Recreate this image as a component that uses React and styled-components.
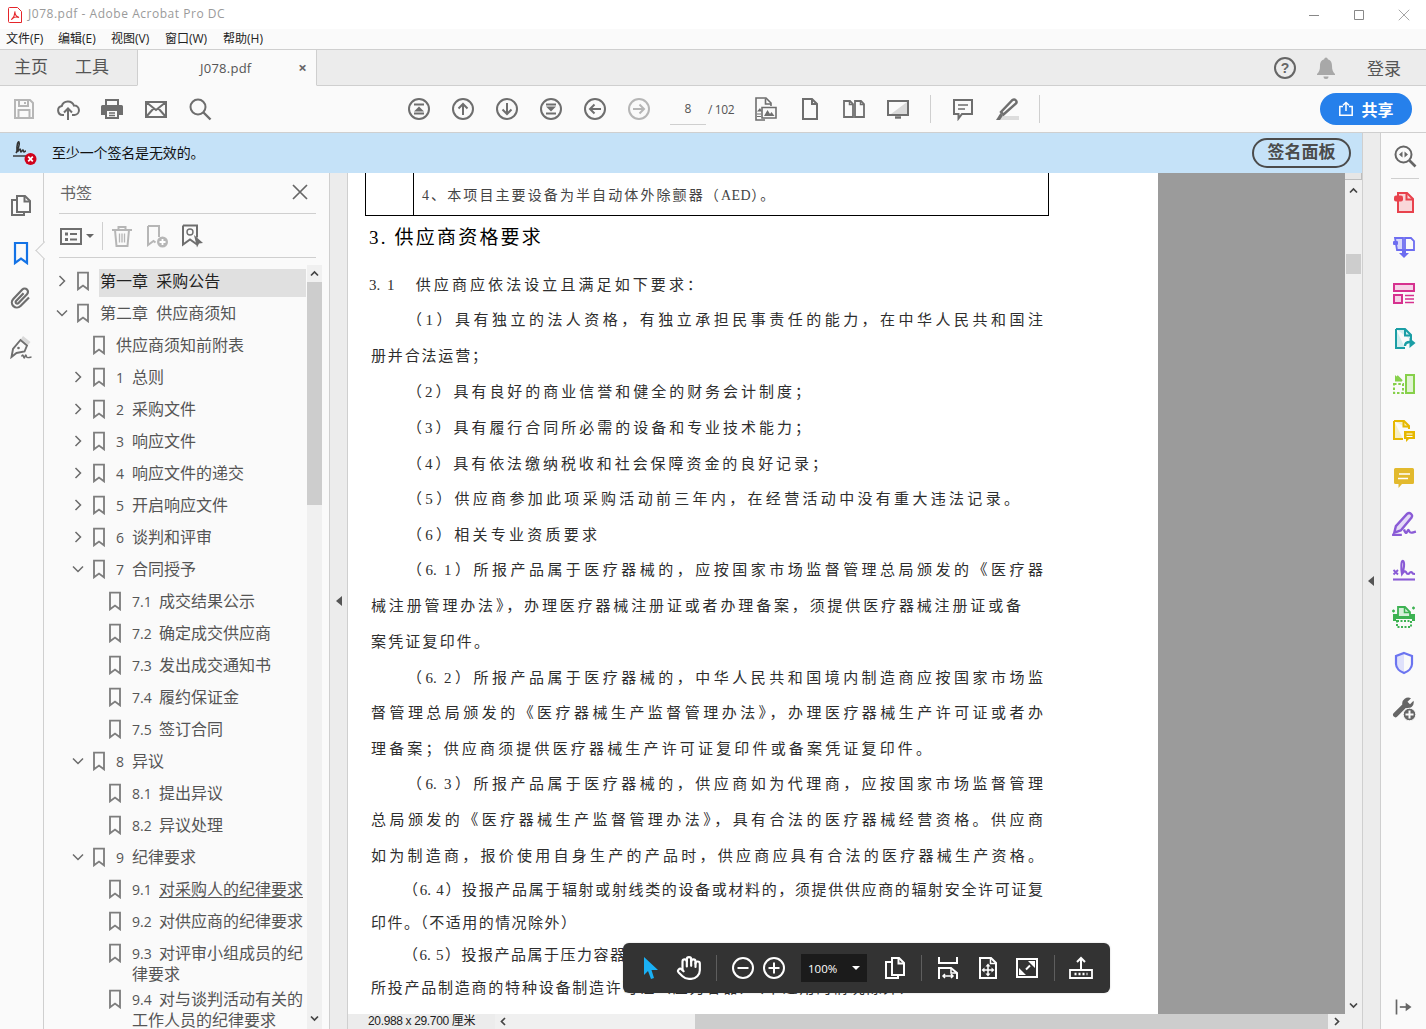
import React from 'react';
import styled, { createGlobalStyle } from 'styled-components';
import { Hand } from 'lucide-react';

const UI = `"Open Sans", "Noto Sans CJK SC", sans-serif`;
const Global = createGlobalStyle`
  html, body { margin: 0; padding: 0; background: #fafafa; }
  * { box-sizing: border-box; }
  body { font-family: ${UI}; }
`;

const Window = styled.div`width: 1426px; height: 1029px; display: flex; flex-direction: column; overflow: hidden; position: relative; background: #fafafa;`;
const TitleBar = styled.div`height: 29px; background: #fff; display: flex; align-items: center; padding-left: 8px; font-size: 12px; color: #9a9a9a; font-family: "Open Sans", sans-serif;`;
const TitleText = styled.span`margin-left: 6px; letter-spacing: .53px; margin-top: -2px;`;
const WinButtons = styled.div`margin-left: auto; display: flex; align-items: center;`;
const WinBtn = styled.div`width: 45px; height: 29px; display: flex; align-items: center; justify-content: center;`;
const MenuBar = styled.div`height: 21px; background: #fafafa; border-bottom: 1px solid #cfcfcf; display: flex; align-items: center; padding: 0 0 2px 6px; font-size: 12px; color: #222;`;
const MenuItem = styled.span`width: ${p => p.$w}px;`;
const TabBar = styled.div`height: 36px; background: #ececec; border-bottom: 1px solid #cfcfcf; display: flex; align-items: stretch;`;
const HomeTab = styled.div`width: ${p => p.$w}px; padding-left: ${p => p.$p}px; font-size: 17px; line-height: 34px; color: #555;`;
const ActiveTab = styled.div`width: 180px; height: 36px; background: #fafafa; border-left: 1px solid #cfcfcf; border-right: 1px solid #cfcfcf; border-bottom: 1px solid #fafafa; display: flex; align-items: center; position: relative; font-size: 13px; letter-spacing: .25px; color: #555; padding-left: 62px;`;
const TabClose = styled.span`margin-left: auto; margin-right: 9px; font-size: 15px; font-weight: 700; color: #666; line-height: 1;`;
const TabRight = styled.div`margin-left: auto; display: flex; align-items: center; padding-right: 25px;`;
const Login = styled.span`font-size: 17px; color: #555; margin-left: 29px;`;
const BellSlot = styled.div`margin-left: 17px;`;
const Toolbar = styled.div`height: 47px; background: #fafafa; border-bottom: 1px solid #cfcfcf; display: flex; align-items: center; padding-left: 2px;`;
const Slot = styled.div`width: ${p => p.$w || 44}px; height: 32px; display: flex; align-items: center; justify-content: center; flex: none; margin-left: ${p => p.$ml || 0}px;`;
const PageField = styled.div`width: 36px; margin-left: 9px; height: 30px; border-bottom: 1px solid #cfcfcf; font-size: 12px; color: #555; text-align: center; line-height: 28px; margin-top: 2px;`;
const PageTotal = styled.span`width: 35px; margin-left: 2px; font-size: 12px; color: #555; letter-spacing: -.4px; flex: none;`;
const ToolSep = styled.div`width: 1px; height: 28px; background: #cfcfcf; flex: none; margin-left: ${p => p.$ml}px;`;
const ShareBtn = styled.button`margin-left: auto; margin-right: 14px; width: 92px; height: 32px; border: 0; border-radius: 16px; background: #2680eb; color: #fff; display: flex; align-items: center; justify-content: center; gap: 7px; font: 700 16px ${UI}; padding: 0;`;

const Body = styled.div`flex: 1; display: flex; min-height: 0;`;
const MainCol = styled.div`width: 1362px; display: flex; flex-direction: column; min-height: 0;`;
const NotifyBar = styled.div`height: 40px; background: #c5e2f8; display: flex; align-items: center; padding: 0 11px 0 12px; font-size: 14px; color: #111;`;
const NotifyText = styled.span`margin: 0 0 2px 14px; letter-spacing: -.15px;`;
const SignPanelBtn = styled.div`margin-left: auto; width: 99px; height: 30px; border: 2px solid #4b4b4b; border-radius: 15px; display: flex; align-items: center; justify-content: center; font-size: 17px; line-height: 1; font-weight: 700; color: #4b4b4b; padding-bottom: 3px;`;
const Content = styled.div`flex: 1; display: flex; min-height: 0;`;

const LeftRail = styled.div`width: 44px; border-right: 1px solid #cfcfcf; background: #fafafa; display: flex; flex-direction: column; align-items: center; position: relative; padding: 20px 2px 0 0;`;
const RailSlot = styled.div`height: ${p => p.$h}px; display: flex; align-items: flex-start; justify-content: center;`;
const Notch = styled.div`position: absolute; left: 38px; top: 71px; width: 13px; height: 13px; background: #fafafa; border-left: 1px solid #cfcfcf; border-bottom: 1px solid #cfcfcf; transform: rotate(45deg);`;

const Panel = styled.div`width: 286px; border-right: 1px solid #cfcfcf; background: #fafafa; display: flex; flex-direction: column; min-height: 0;`;
const PanelHead = styled.div`height: 41px; margin: 0 13px 0 15px; border-bottom: 1px solid #cfcfcf; display: flex; align-items: center; justify-content: space-between; font-size: 16px; color: #666; padding: 0 8px 3px 1px;`;
const PanelTools = styled.div`height: 44px; margin: 0 13px 0 15px; border-bottom: 1px solid #cfcfcf; display: flex; align-items: center;`;
const ToolCaret = styled.span`width: 0; height: 0; border-left: 4px solid transparent; border-right: 4px solid transparent; border-top: 4px solid #666; margin-left: 3px;`;
const PanelSep = styled.div`width: 1px; height: 28px; background: #cfcfcf; margin: 0 2px 0 8px;`;
const TreeWrap = styled.div`flex: 1; display: flex; min-height: 0; padding: 7px 7px 0 10px;`;
const Tree = styled.div`flex: 1; overflow: hidden; min-width: 0;`;
const Row = styled.div`height: ${p => p.$h || 32}px; display: flex; align-items: flex-start; padding-left: ${p => p.$lv * 16}px;`;
const Chev = styled.div`width: 16px; height: 32px; flex: none; display: flex; align-items: center; justify-content: center;`;
const Mark = styled.div`width: 22px; margin-left: 2px; height: 32px; flex: none; display: flex; align-items: center; justify-content: center;`;
const Label = styled.div`flex: 1; min-width: 0; margin: 4px 0 0 5px; padding: 2px 3px ${p => p.$sel ? 6 : 0}px 1px; font-size: 16px; line-height: 20px; white-space: pre-wrap; color: ${p => p.$sel ? '#222' : '#555'}; background: ${p => p.$sel ? '#e0e0e0' : 'transparent'}; height: fit-content;`;
const Num = styled.span`display: inline-block; width: ${p => p.$w}px; font-size: 14px;`;
const Linked = styled.span`text-decoration: underline; text-underline-offset: 2px;`;
const TreeScroll = styled.div`width: 15px; flex: none; background: #f0f0f0; display: flex; flex-direction: column; margin-left: 1px;`;
const ScrollBtn = styled.div`height: ${p => p.$h}px; display: flex; align-items: center; justify-content: center;`;
const TreeThumb = styled.div`height: 223px; background: #cdcdcd;`;
const Fill = styled.div`flex: 1;`;

const Collapse = styled.div`width: 18px; background: #ececec; border-right: 1px solid #cfcfcf; display: flex; align-items: center; justify-content: center;`;
const Triangle = styled.span`width: 0; height: 0; border-top: 5px solid transparent; border-bottom: 5px solid transparent; border-right: 6px solid #555;`;
const DocArea = styled.div`flex: 1; display: flex; flex-direction: column; min-width: 0;`;
const DocRow = styled.div`flex: 1; display: flex; min-height: 0;`;
const Page = styled.div`width: 810px; background: #fff; overflow: hidden; font-family: "Liberation Serif", "Noto Sans CJK SC", serif; color: #2e2e2e;`;
const PdfTable = styled.div`margin-left: 17px; width: 684px; height: 43px; border: solid #000; border-width: 0 1px 1.5px 1px; display: flex;`;
const PdfCellA = styled.div`width: 48px; border-right: 1px solid #000;`;
const PdfCellB = styled.div`padding: 14px 0 0 8px; font-size: 14px; line-height: 18px; letter-spacing: 2.1px; white-space: nowrap; color: #444;`;
const Aed = styled.span`letter-spacing: .5px; font-size: 14px;`;
const PdfHeading = styled.div`margin: 1px 0 8px 21px; height: 42px; line-height: 42px; font-size: 19px; letter-spacing: 2.2px; color: #000;`;
const PdfLine = styled.div`margin-left: ${p => p.$l}px; width: ${p => p.$w}px; height: ${p => p.$h}px; line-height: 36px; font-size: 15px; text-align: justify; text-align-last: justify;`;
const Gray = styled.div`width: 187px; background: #9b9b9b;`;
const VScroll = styled.div`width: 17px; background: #f0f0f0; display: flex; flex-direction: column; flex: none;`;
const VCap = styled.div`height: 7px; background: #e6e6e6; border: solid #bdbdbd; border-width: 0 1px 1px 0;`;
const VBtn = styled.div`height: ${p => p.$h}px; display: flex; align-items: center; justify-content: center;`;
const VThumb = styled.div`height: 20px; background: #cdcdcd; margin: 0 1px;`;
const StatusBar = styled.div`height: 15px; display: flex; align-items: center; background: #f0f0f0;`;
const Dim = styled.div`width: 147px; height: 15px; background: #ececec; padding-left: 20px; font: 12px/15px "Liberation Sans", "Noto Sans CJK SC", sans-serif; color: #222; letter-spacing: -.35px; white-space: nowrap;`;
const HBtn = styled.div`width: 17px; height: 15px; display: flex; align-items: center; justify-content: center; flex: none;`;
const HGap = styled.div`width: 183px; height: 15px; flex: none;`;
const HThumb = styled.div`flex: 1; height: 15px; background: #cdcdcd;`;

const Gutter = styled.div`width: 19px; background: #ececec; border-left: 1px solid #cfcfcf; border-right: 1px solid #cfcfcf; display: flex; align-items: center; justify-content: center; padding-right: 2px;`;
const RightRail = styled.div`width: 45px; background: #fafafa; display: flex; flex-direction: column; align-items: center;`;
const RailTop = styled.div`height: 46px; width: 28px; border-bottom: 1px solid #cfcfcf; display: flex; align-items: center; justify-content: center; margin-left: 2px; flex: none;`;
const RailIcon = styled.div`height: ${p => p.$h || 46}px; display: flex; align-items: center; justify-content: center; flex: none;`;
const RailSpacer = styled.div`flex: 1;`;

const FloatBar = styled.div`position: absolute; left: 623px; top: 943px; width: 487px; height: 50px; background: #333; border-radius: 6px; display: flex; align-items: center; padding-left: 8px; box-shadow: 0 0 2px rgba(0,0,0,.2);`;
const FSlot = styled.div`width: ${p => p.$w}px; margin-left: ${p => p.$ml || 0}px; height: 32px; display: flex; align-items: center; justify-content: center; flex: none;`;
const FSep = styled.div`width: 1px; height: 26px; background: #5e5e5e; margin-left: ${p => p.$ml}px; flex: none;`;
const ZoomBox = styled.div`width: 66px; height: 28px; background: #1b1b1b; margin-left: 12px; display: flex; align-items: center; justify-content: space-between; padding: 0 7px 0 7px; color: #fff; font: 11.500px "Open Sans", sans-serif; flex: none;`;
const ZoomCaret = styled.span`width: 0; height: 0; border-left: 4px solid transparent; border-right: 4px solid transparent; border-top: 4px solid #fff;`;

const Svg = styled.svg`display: block; flex: none; width: ${p => p.$w || p.$s || 24}px; height: ${p => p.$s || 24}px; color: ${p => p.$c || '#6e6e6e'};`;
const I = ({ s, w, c, vb = '0 0 24 24', children }) => (
  <Svg $s={s} $w={w} $c={c} viewBox={vb} fill="none" stroke="currentColor" strokeWidth="2" strokeLinecap="butt" strokeLinejoin="miter">{children}</Svg>
);

const L = '#b6b6b6';
const Save = () => <I c={L}><path d="M3 3h15l3 3v15H3z"/><path d="M7 3v6h9V3M6.500 21v-8h11v8"/><path d="M13 5v2"/></I>;
const Cloud = () => <I><path d="M8 18H6.500a4.500 4.500 0 0 1-.8-8.900A6.500 6.500 0 0 1 18 8.600a4.700 4.700 0 0 1 .5 9.400H16"/><path d="M12 23V12M8 15.500l4-4 4 4"/></I>;
const Print = () => <I><path fill="currentColor" stroke="none" d="M5 2h14v6h2.500A1.500 1.500 0 0 1 23 9.500V18h-4v4H5v-4H1V9.500A1.500 1.500 0 0 1 2.500 8H5zM7 4v4h10V4zM7 14v6h10v-6z"/><path strokeWidth="1.300" d="M9 16h6M9 18.500h6"/></I>;
const Mail = () => <I><path d="M2 5h20v15H2zM2 5l10 8 10-8M2 20l7.500-8.500M22 20l-7.500-8.500"/></I>;
const Search = () => <I><circle cx="10" cy="10" r="7.500"/><path strokeWidth="2.400" d="M15.500 15.500L22.500 22.500"/></I>;
const Circ = ({ c, children }) => <I c={c}><circle cx="12" cy="12" r="10"/>{children}</I>;
const Tri = p => <path fill="currentColor" stroke="none" {...p}/>;
const First = () => <Circ><Tri d="M12 9.500l5 5H7z"/><path d="M7 7.500h10M7 16.500h10"/></Circ>;
const Last = () => <Circ><Tri d="M12 14.500l5-5H7z"/><path d="M7 7.500h10M7 16.500h10"/></Circ>;
const Up = () => <Circ><path d="M12 18V7M7.500 11.500L12 7l4.500 4.500"/></Circ>;
const Down = () => <Circ><path d="M12 6v11M7.500 12.500L12 17l4.500-4.500"/></Circ>;
const Back = () => <Circ><path d="M18 12H7M11.500 7.500L7 12l4.500 4.500"/></Circ>;
const Fwd = () => <Circ c={L}><path d="M6 12h11M12.500 7.500L17 12l-4.500 4.500"/></Circ>;
const DocPic = () => <I><path strokeWidth="1.600" d="M12 23H3V1h10l5 5v3"/><path strokeWidth="1.600" d="M12.500 1.500V7H18"/><path strokeWidth="1.600" d="M9 10.500h14V21H9z"/><Tri d="M11 19l3.500-6 2.500 4 1.500-2 3 4zM4 14.500L7 11l2 3.500z"/><path strokeWidth="1.200" d="M4 17h4M4 19.500h4"/></I>;
const PageIc = () => <I><path d="M5 2h9l5 5v15H5z"/><path d="M14 2v5h5"/></I>;
const TwoPage = () => <I><path strokeWidth="1.800" d="M2 4h6l3 3v13H2zM13 4h6l3 3v13h-9z"/><path strokeWidth="1.500" d="M7.500 4v3.500H11M18.500 4v3.500H22"/></I>;
const Monitor = () => <I><path fill="#d9d9d9" stroke="none" d="M21 5v12H5z"/><path d="M2 4h20v14H2z"/><path strokeWidth="2.400" d="M9 20.500h6"/></I>;
const Comment = () => <I><path d="M3 3h18v14H11l-3.500 4.500V17H3z"/><path strokeWidth="1.500" d="M7 8h10M7 12h7"/></I>;
const Marker = () => <I><path fill="#dcdcdc" stroke="none" d="M5 19h19v4H3z"/><path strokeWidth="2.400" d="M8.500 17.500L6 15 17.500 3a2.500 2.500 0 0 1 3.500 3.500z"/><Tri d="M5.500 16L8 18.500 5 23H1z"/></I>;
const ShareIc = () => <Svg $s={16} $c="#fff" viewBox="0 0 16 16" fill="none" stroke="currentColor" strokeWidth="1.500"><path d="M5 5.500H1.800v8.700h12.400V5.500H11"/><path d="M8 10V1.500M5 4.300L8 1.500l3 2.800"/></Svg>;

const Help = () => <I c="#666"><circle cx="12" cy="12" r="10"/><text x="12" y="17" textAnchor="middle" fontSize="14" fontWeight="700" stroke="none" fill="currentColor" fontFamily="Liberation Sans">?</text></I>;
const Bell = () => <I c="#a8a8a8"><path fill="currentColor" stroke="none" d="M12 1.500a1.800 1.800 0 0 1 1.800 1.700C17 4 18 7 18 10c0 4 1 6 3 8v1H3v-1c2-2 3-4 3-8 0-3 1-6 4.200-6.800A1.800 1.800 0 0 1 12 1.500zM9.500 20.500h5a2.500 2.500 0 0 1-5 0z"/></I>;
const AcroLogo = () => <Svg $s={16} $w={14} $c="#e5252a" viewBox="0 0 14 16" fill="none" stroke="currentColor"><path d="M1.500.5h8l4 4v11h-12a1 1 0 0 1-1-1v-13a1 1 0 0 1 1-1z"/><path strokeWidth="1.100" d="M7 4.500c-.6 1.500.5 3 1 4s2.200 1.500 3 2c-1-.5-4.500-1-6 .5S3 13 4.500 11.500 6.800 6.500 7 4.500z"/></Svg>;

const SignBad = () => (
  <Svg $s={26} $w={26} $c="#333" viewBox="0 0 26 26" fill="none" stroke="currentColor" strokeWidth="1.600">
    <path d="M4 13c2-3 4-9 3-11-1-1-2.500 3-2 9 .3 2 2-2 3-2s0 3 1 3 1-2 2-2 0 2 1 2 1-1 2-1"/>
    <path strokeWidth="1.400" d="M1 16h14"/>
    <circle cx="18.500" cy="19" r="6" fill="#d0021b" stroke="none"/>
    <path stroke="#fff" strokeWidth="1.800" d="M16.200 16.700l4.600 4.600M20.800 16.700l-4.600 4.600"/>
  </Svg>
);
const Pages = ({ c }) => <I c={c}><path strokeWidth="2" d="M8 3h8l5 5v11H8z"/><path strokeWidth="2" d="M15.500 3v5.500H21"/><path strokeWidth="2" d="M8 7H3v15h12v-3"/></I>;
const BookmarkOutline = ({ c, s = 24, sw = 2.200 }) => <I c={c} s={s}><path strokeWidth={sw} d="M6 2h12v20l-6-4.500L6 22z"/></I>;
const Clip = () => <I><path strokeWidth="2.200" d="M20 11.500l-8.500 8.500a5 5 0 0 1-7.200-7l9-9.500a3.300 3.300 0 0 1 4.700 4.700l-8.700 9a1.500 1.500 0 0 1-2.200-2.200l7.500-7.800"/></I>;
const Pen = () => <I><path fill="#d9d9d9" stroke="none" d="M14 1l7.500 6-2.500 3-7-6z"/><path strokeWidth="1.900" d="M11.500 5L18 10.500 15.500 16.500 7.500 18 2.500 22 4 14z"/><circle cx="9.500" cy="13" r="1.300" fill="currentColor" stroke="none"/><path strokeWidth="1.500" d="M12.500 21.500c1-2 1.500-2 2 0s1 2 1.500 0 1-2 1.500 0 1.500 1 5 .5"/></I>;
const X = ({ s = 16, c = '#666', sw = 1.700 }) => <Svg $s={s} $c={c} viewBox="0 0 16 16" fill="none" stroke="currentColor" strokeWidth={sw}><path d="M1 1l14 14M15 1L1 15"/></Svg>;
const ListIc = () => <I><path d="M2 5h20v15H2z"/><Tri d="M6 8.500h3v3H6zM6 14h3v3H6z"/><path strokeWidth="1.800" d="M11 10h7M11 15.500h7"/></I>;
const Trash = () => <I c={L}><path d="M2 6h20M8.500 6V3h7v3M5 6l1.500 16h11L19 6"/><path strokeWidth="1.300" d="M9.500 9.500v9M12 9.500v9M14.500 9.500v9"/></I>;
const AddMark = () => <I c={L}><path d="M4 2h11v11M4 2v19l5.500-4 2 1.500"/><circle cx="18.500" cy="18" r="5.500" fill="currentColor" stroke="none"/><path stroke="#fff" strokeWidth="1.800" d="M18.500 15v6M15.500 18h6"/></I>;
const SetMark = () => <I><path d="M3 1.500h14v12M3 1.500V20.500l7-5 7 5"/><circle cx="10" cy="8" r="3" strokeWidth="1.400"/><Tri d="M14 11l9 8-4 .5-2 4z"/></I>;
const ChevR = () => <Svg $s={12} $c="#6b6b6b" viewBox="0 0 12 12" fill="none" stroke="currentColor" strokeWidth="1.500"><path d="M3.500 1l5 5-5 5"/></Svg>;
const ChevD = () => <Svg $s={12} $c="#6b6b6b" viewBox="0 0 12 12" fill="none" stroke="currentColor" strokeWidth="1.500"><path d="M1 3.500l5 5 5-5"/></Svg>;
const Caret = ({ d }) => <Svg $s={9} $c="#444" viewBox="0 0 9 9" fill="none" stroke="currentColor" strokeWidth="1.700"><path d={d === 'up' ? 'M1 6.500l3.500-3.500 3.500 3.500' : d === 'down' ? 'M1 2.500l3.500 3.500 3.500-3.500' : 'M6 1L2.500 4.500 6 8'}/></Svg>;
const CaretR = () => <Svg $s={9} $c="#444" viewBox="0 0 9 9" fill="none" stroke="currentColor" strokeWidth="1.700"><path d="M3 1l3.500 3.500L3 8"/></Svg>;

/* right rail */
const ZoomDoc = () => <I c="#666"><circle cx="10.500" cy="10.500" r="8"/><path strokeWidth="2.600" d="M16.500 16.500l6 6"/><Tri d="M6 10.500l3.500-3v6zM15 10.500l-3.500-3v6z"/></I>;
const RExport = () => { const c = '#e8424d'; return <I c={c}><path fill="#f9d7d9" d="M6 3h9l6 6v13H6z"/><path d="M14.500 3v6.500H21"/><rect x="2" y="5.500" width="9" height="6" rx="2" fill={c} stroke="none"/></I>; };
const RCombine = () => { const c = '#6d6df0'; return <I c={c}><path fill="#d9d9fb" strokeWidth="1.800" d="M3 3h8v12H5z"/><path strokeWidth="1.800" d="M13 3h6l3 3v9h-9z"/><Tri d="M10 14h4v4h3l-5 5-5-5h3z"/><rect x="1" y="6" width="5" height="4" rx="1" fill={c} stroke="none"/></I>; };
const ROrganize = () => { const c = '#d6318f'; return <I c={c}><path fill="#f6d4e8" d="M2 3h20v7H2zM2 14h8v8H2z"/><path strokeWidth="1.500" d="M13 14.500h9M13 18h9M13 21.500h9"/></I>; };
const RExportDoc = () => { const c = '#1a9ea5'; return <I c={c}><path fill="#d3eeef" d="M4 2h9l6 6v5M4 2v19h9"/><path d="M13 2v6.500h6"/><path strokeWidth="2.300" d="M13 19c0-3 2-4 5-4"/><Tri d="M17.500 11l6 5-6 5z"/></I>; };
const RCompress = () => { const c = '#86d04a'; return <I c={c}><path fill="#e2f4d4" d="M14 2h8v18h-8z"/><path strokeDasharray="2.500 1.800" d="M2 11h9v9H2z"/><path strokeWidth="2.200" d="M10 8L5 3"/><Tri d="M3 2v6.500h6.500z"/></I>; };
const RFormDoc = () => { const c = '#e6b800'; return <I c={c}><path fill="#f6efc4" d="M2 2h10l5 5v3M2 2v18h9"/><path d="M11.500 2v5.500H17"/><path fill={c} stroke="none" d="M12 12h11v8h-6l-3 3v-3h-2z"/><path stroke="#fff" strokeWidth="1.100" d="M14.500 15h6M14.500 17.500h6"/></I>; };
const RNote = () => { const c = '#e2b92d'; return <I c={c}><path fill={c} stroke="none" d="M3.500 2h17A1.500 1.500 0 0 1 22 3.500v13a1.500 1.500 0 0 1-1.500 1.500H10l-3.500 4V18h-3A1.500 1.500 0 0 1 2 16.500v-13A1.500 1.500 0 0 1 3.500 2z"/><path stroke="#fff" strokeWidth="1.700" d="M7 8h11M6 12.500h10"/></I>; };
const RFill = () => { const c = '#8a5bd6'; return <I c={c} s={26}><path fill="#e5daf7" strokeWidth="2.200" d="M3 20l1.500-6L15 2.500a2.700 2.700 0 0 1 4 3.500L9 18z"/><path strokeWidth="2.200" d="M1 22h9M12 17c1 3.500 2 4 3 2s1-2 2 0 2 1 6 0"/></I>; };
const RSign = () => { const c = '#8a5bd6'; return <I c={c}><path strokeWidth="1.900" d="M1.500 12l4.500 4.500M6 12l-4.500 4.500"/><path strokeWidth="2.100" d="M10 16c2-4 3-12 1-13s-2 8-1 13c2-3 3-3 4-2s0 2 2 2 1-2 3-2 0 2 4 2"/><path strokeWidth="2.100" d="M1 21.500h22"/></I>; };
const RPrint = () => { const c = '#3cb252'; return <I c={c}><path fill={c} stroke="none" d="M1 9h22v7h-3v-2H4v2H1z"/><path fill="#d5efda" strokeWidth="1.800" d="M6 12V2h7l5 5v5z"/><path strokeWidth="1.500" d="M12.500 2v5.500H18"/><path strokeDasharray="2 1.500" d="M5 16h14v6H5z"/><path strokeWidth="1.300" d="M20 3h3M21.500 1.500v3M0 6h3M1.500 4.500v3"/></I>; };
const RShield = () => { const c = '#6b74f0'; return <I c={c}><path fill="#dfe1fb" stroke="none" d="M12 2L4 5v8c0 4 4 7.500 8 9z"/><path strokeWidth="2.200" d="M12 2l8 3v8c0 4-4 7.500-8 9-4-1.500-8-5-8-9V5z"/></I>; };
const RTools = () => <I c="#666"><path fill="currentColor" stroke="none" d="M19 1.200L15.500 4.700 18 7.200l3.500-3.500A6 6 0 0 1 13.800 11L5 19.800A2.500 2.500 0 0 1 1.500 16.300L10.300 7.500A6 6 0 0 1 19 1.200z"/><circle cx="17.500" cy="17.500" r="6.300" fill="currentColor" stroke="#fafafa" strokeWidth="1"/><path stroke="#fafafa" strokeWidth="2" d="M17.500 13.500v8M13.500 17.500h8"/></I>;
const RCollapse = () => <I s={20} c="#666"><path d="M3 3v18"/><path strokeWidth="2" d="M7 12h12"/><Tri d="M14 7l7 5-7 5z"/></I>;

/* floating bar */
const W = '#fff';
const Cursor = () => <I c="#1ab0f5"><Tri d="M6 1l14 13h-6.500l2.500 8-3 1-3-8L6 19z"/></I>;
const FMinus = () => <I c={W}><circle cx="12" cy="12" r="10"/><path d="M6.500 12h11"/></I>;
const FPlus = () => <I c={W}><circle cx="12" cy="12" r="10"/><path d="M6.500 12h11M12 6.500v11"/></I>;
const FPages = () => <I c={W}><path d="M9 2h7l5 5v12H9z"/><path d="M15.500 2v5.500H21"/><path d="M9 6H3v16h12v-3"/></I>;
const FFitW = () => <I c={W}><path d="M3 1v6h18V1"/><path d="M3 23V12h12l6 5v6"/><path strokeWidth="1.500" d="M15 12v5h6"/><path strokeWidth="1.500" d="M7 20h10M9 18l-2 2 2 2M15 18l2 2-2 2"/></I>;
const FFitP = () => <I c={W}><path d="M4 2h11l5 5v15H4z"/><path strokeWidth="1.500" d="M14.500 2v5.500H20"/><path strokeWidth="1.500" d="M12 9v10M7 14h10"/><Tri d="M12 7.500l2.500 3h-5zM12 20.500l2.500-3h-5zM5.500 14l3-2.500v5zM18.500 14l-3-2.500v5z"/></I>;
const FFull = () => <I c={W}><path d="M2 3h20v18H2z"/><Tri d="M13 5h7v7zM11 19H4v-7z"/><path d="M15 9.500L11 13.500"/></I>;
const FUpload = () => <I c={W}><path d="M12 2v11M8 6l4-4 4 4"/><path d="M1 14h22v8H1z" strokeWidth="1.800"/><path strokeDasharray="2 2" strokeWidth="2.400" d="M5.500 18h13"/></I>;

const tree = [
  { lv: 0, ch: 'r', t: '第一章  采购公告', sel: true },
  { lv: 0, ch: 'd', t: '第二章  供应商须知' },
  { lv: 1, t: '供应商须知前附表' },
  { lv: 1, ch: 'r', n: '1', t: '总则' },
  { lv: 1, ch: 'r', n: '2', t: '采购文件' },
  { lv: 1, ch: 'r', n: '3', t: '响应文件' },
  { lv: 1, ch: 'r', n: '4', t: '响应文件的递交' },
  { lv: 1, ch: 'r', n: '5', t: '开启响应文件' },
  { lv: 1, ch: 'r', n: '6', t: '谈判和评审' },
  { lv: 1, ch: 'd', n: '7', t: '合同授予' },
  { lv: 2, n: '7.1', t: '成交结果公示' },
  { lv: 2, n: '7.2', t: '确定成交供应商' },
  { lv: 2, n: '7.3', t: '发出成交通知书' },
  { lv: 2, n: '7.4', t: '履约保证金' },
  { lv: 2, n: '7.5', t: '签订合同' },
  { lv: 1, ch: 'd', n: '8', t: '异议' },
  { lv: 2, n: '8.1', t: '提出异议' },
  { lv: 2, n: '8.2', t: '异议处理' },
  { lv: 1, ch: 'd', n: '9', t: '纪律要求' },
  { lv: 2, n: '9.1', t: '对采购人的纪律要求', link: true },
  { lv: 2, n: '9.2', t: '对供应商的纪律要求' },
  { lv: 2, n: '9.3', t: '对评审小组成员的纪律要求', h: 46 },
  { lv: 2, n: '9.4', t: '对与谈判活动有关的工作人员的纪律要求', h: 48 },
];

const pdf = [
  [21, 333, 35, '3. 1　供应商应依法设立且满足如下要求：'],
  [59, 636, 36, '（1）具有独立的法人资格，有独立承担民事责任的能力，在中华人民共和国注'],
  [23, 116, 36, '册并合法运营；'],
  [59, 403, 36, '（2）具有良好的商业信誉和健全的财务会计制度；'],
  [59, 403, 36, '（3）具有履行合同所必需的设备和专业技术能力；'],
  [59, 420, 35, '（4）具有依法缴纳税收和社会保障资金的良好记录；'],
  [59, 612, 36, '（5）供应商参加此项采购活动前三年内，在经营活动中没有重大违法记录。'],
  [59, 190, 35, '（6）相关专业资质要求'],
  [59, 636, 36, '（6. 1）所报产品属于医疗器械的，应按国家市场监督管理总局颁发的《医疗器'],
  [23, 650, 36, '械注册管理办法》，办理医疗器械注册证或者办理备案，须提供医疗器械注册证或备'],
  [23, 118, 36, '案凭证复印件。'],
  [59, 636, 35, '（6. 2）所报产品属于医疗器械的，中华人民共和国境内制造商应按国家市场监'],
  [23, 672, 36, '督管理总局颁发的《医疗器械生产监督管理办法》，办理医疗器械生产许可证或者办'],
  [23, 560, 35, '理备案；供应商须提供医疗器械生产许可证复印件或备案凭证复印件。'],
  [59, 636, 36, '（6. 3）所报产品属于医疗器械的，供应商如为代理商，应按国家市场监督管理'],
  [23, 672, 36, '总局颁发的《医疗器械生产监督管理办法》，具有合法的医疗器械经营资格。供应商'],
  [23, 672, 34, '如为制造商，报价使用自身生产的产品时，供应商应具有合法的医疗器械生产资格。'],
  [55, 640, 33, '（6. 4）投报产品属于辐射或射线类的设备或材料的，须提供供应商的辐射安全许可证复'],
  [23, 205, 32, '印件。（不适用的情况除外）'],
  [55, 519, 33, '（6. 5）投报产品属于压力容器类设备的，须提供医疗器械生产企业或其'],
  [23, 544, 33, '所投产品制造商的特种设备制造许可证（压力容器）（不适用的情况除外）'],
];

export default function App() {
  return (
    <Window>
      <Global />
      <TitleBar>
        <AcroLogo />
        <TitleText>J078.pdf - Adobe Acrobat Pro DC</TitleText>
        <WinButtons>
          <WinBtn><Svg $s={12} $c="#888" viewBox="0 0 12 12" stroke="currentColor"><path d="M1 6.500h10"/></Svg></WinBtn>
          <WinBtn><Svg $s={12} $c="#888" viewBox="0 0 12 12" fill="none" stroke="currentColor"><path d="M1.500 1.500h9v9h-9z"/></Svg></WinBtn>
          <WinBtn><X s={12} c="#888" sw={1}/></WinBtn>
        </WinButtons>
      </TitleBar>
      <MenuBar>
        <MenuItem $w={52}>文件(F)</MenuItem>
        <MenuItem $w={53}>编辑(E)</MenuItem>
        <MenuItem $w={54}>视图(V)</MenuItem>
        <MenuItem $w={58}>窗口(W)</MenuItem>
        <MenuItem $w={60}>帮助(H)</MenuItem>
      </MenuBar>
      <TabBar>
        <HomeTab $w={75} $p={14}>主页</HomeTab>
        <HomeTab $w={62} $p={0}>工具</HomeTab>
        <ActiveTab>J078.pdf<TabClose>×</TabClose></ActiveTab>
        <TabRight>
          <Help />
          <BellSlot><Bell /></BellSlot>
          <Login>登录</Login>
        </TabRight>
      </TabBar>
      <Toolbar>
        <Slot><Save /></Slot><Slot><Cloud /></Slot><Slot><Print /></Slot><Slot><Mail /></Slot><Slot><Search /></Slot>
        <Slot $ml={175}><First /></Slot><Slot><Up /></Slot><Slot><Down /></Slot><Slot><Last /></Slot><Slot><Back /></Slot><Slot><Fwd /></Slot>
        <PageField>8</PageField>
        <PageTotal>/ 102</PageTotal>
        <Slot><DocPic /></Slot><Slot $ml={1}><PageIc /></Slot><Slot><TwoPage /></Slot><Slot><Monitor /></Slot>
        <ToolSep $ml={10} />
        <Slot $ml={10}><Comment /></Slot><Slot><Marker /></Slot>
        <ToolSep $ml={10} />
        <ShareBtn><ShareIc />共享</ShareBtn>
      </Toolbar>
      <Body>
        <MainCol>
          <NotifyBar>
            <SignBad />
            <NotifyText>至少一个签名是无效的。</NotifyText>
            <SignPanelBtn>签名面板</SignPanelBtn>
          </NotifyBar>
          <Content>
            <LeftRail>
              <RailSlot $h={48}><Pages /></RailSlot>
              <RailSlot $h={45}><BookmarkOutline c="#1473e6" /></RailSlot>
              <RailSlot $h={49}><Clip /></RailSlot>
              <RailSlot $h={48}><Pen /></RailSlot>
              <Notch />
            </LeftRail>
            <Panel>
              <PanelHead>书签<X s={16} c="#666" /></PanelHead>
              <PanelTools>
                <ListIc /><ToolCaret />
                <PanelSep />
                <Slot $w={34}><Trash /></Slot>
                <Slot $w={34}><AddMark /></Slot>
                <Slot $w={38}><SetMark /></Slot>
              </PanelTools>
              <TreeWrap>
                <Tree>
                  {tree.map(r => (
                    <Row key={r.t} $lv={r.lv} $h={r.h}>
                      <Chev>{r.ch === 'r' ? <ChevR /> : r.ch === 'd' ? <ChevD /> : null}</Chev>
                      <Mark><BookmarkOutline c="#7d7d7d" s={20} /></Mark>
                      <Label $sel={r.sel}>
                        {r.n && <Num $w={r.lv === 1 ? 16 : 27}>{r.n}</Num>}
                        {r.link ? <Linked>{r.t}</Linked> : r.t}
                      </Label>
                    </Row>
                  ))}
                </Tree>
                <TreeScroll>
                  <ScrollBtn $h={17}><Caret d="up" /></ScrollBtn>
                  <TreeThumb />
                  <Fill />
                  <ScrollBtn $h={22}><Caret d="down" /></ScrollBtn>
                </TreeScroll>
              </TreeWrap>
            </Panel>
            <Collapse><Triangle /></Collapse>
            <DocArea>
              <DocRow>
                <Page>
                  <PdfTable>
                    <PdfCellA />
                    <PdfCellB>4、本项目主要设备为半自动体外除颤器（<Aed>AED</Aed>）。</PdfCellB>
                  </PdfTable>
                  <PdfHeading>3. 供应商资格要求</PdfHeading>
                  {pdf.map(([l, w, h, t]) => <PdfLine key={t} $l={l} $w={w} $h={h}>{t}</PdfLine>)}
                </Page>
                <Gray />
                <VScroll>
                  <VCap />
                  <VBtn $h={20}><Caret d="up" /></VBtn>
                  <VBtn $h={54} />
                  <VThumb />
                  <Fill />
                  <VBtn $h={18}><Caret d="down" /></VBtn>
                </VScroll>
              </DocRow>
              <StatusBar>
                <Dim>20.988 x 29.700 厘米</Dim>
                <HBtn><Caret d="left" /></HBtn>
                <HGap />
                <HThumb />
                <HBtn><CaretR /></HBtn>
                <HBtn />
              </StatusBar>
            </DocArea>
          </Content>
        </MainCol>
        <Gutter><Triangle /></Gutter>
        <RightRail>
          <RailTop><ZoomDoc /></RailTop>
          <RailIcon $h={45}><RExport /></RailIcon>
          <RailIcon><RCombine /></RailIcon>
          <RailIcon><ROrganize /></RailIcon>
          <RailIcon><RExportDoc /></RailIcon>
          <RailIcon><RCompress /></RailIcon>
          <RailIcon><RFormDoc /></RailIcon>
          <RailIcon $h={47}><RNote /></RailIcon>
          <RailIcon><RFill /></RailIcon>
          <RailIcon><RSign /></RailIcon>
          <RailIcon $h={47}><RPrint /></RailIcon>
          <RailIcon><RShield /></RailIcon>
          <RailIcon><RTools /></RailIcon>
          <RailSpacer />
          <RailIcon $h={44}><RCollapse /></RailIcon>
        </RightRail>
      </Body>
      <FloatBar>
        <FSlot $w={38}><Cursor /></FSlot>
        <FSlot $w={38} $ml={1}><Hand size={26} color="#fff" strokeWidth={2} /></FSlot>
        <FSep $ml={8} />
        <FSlot $w={30} $ml={11}><FMinus /></FSlot>
        <FSlot $w={30} $ml={1}><FPlus /></FSlot>
        <ZoomBox>100%<ZoomCaret /></ZoomBox>
        <FSlot $w={32} $ml={12}><FPages /></FSlot>
        <FSep $ml={10} />
        <FSlot $w={32} $ml={10}><FFitW /></FSlot>
        <FSlot $w={32} $ml={8}><FFitP /></FSlot>
        <FSlot $w={32} $ml={7}><FFull /></FSlot>
        <FSep $ml={11} />
        <FSlot $w={32} $ml={10}><FUpload /></FSlot>
      </FloatBar>
    </Window>
  );
}
